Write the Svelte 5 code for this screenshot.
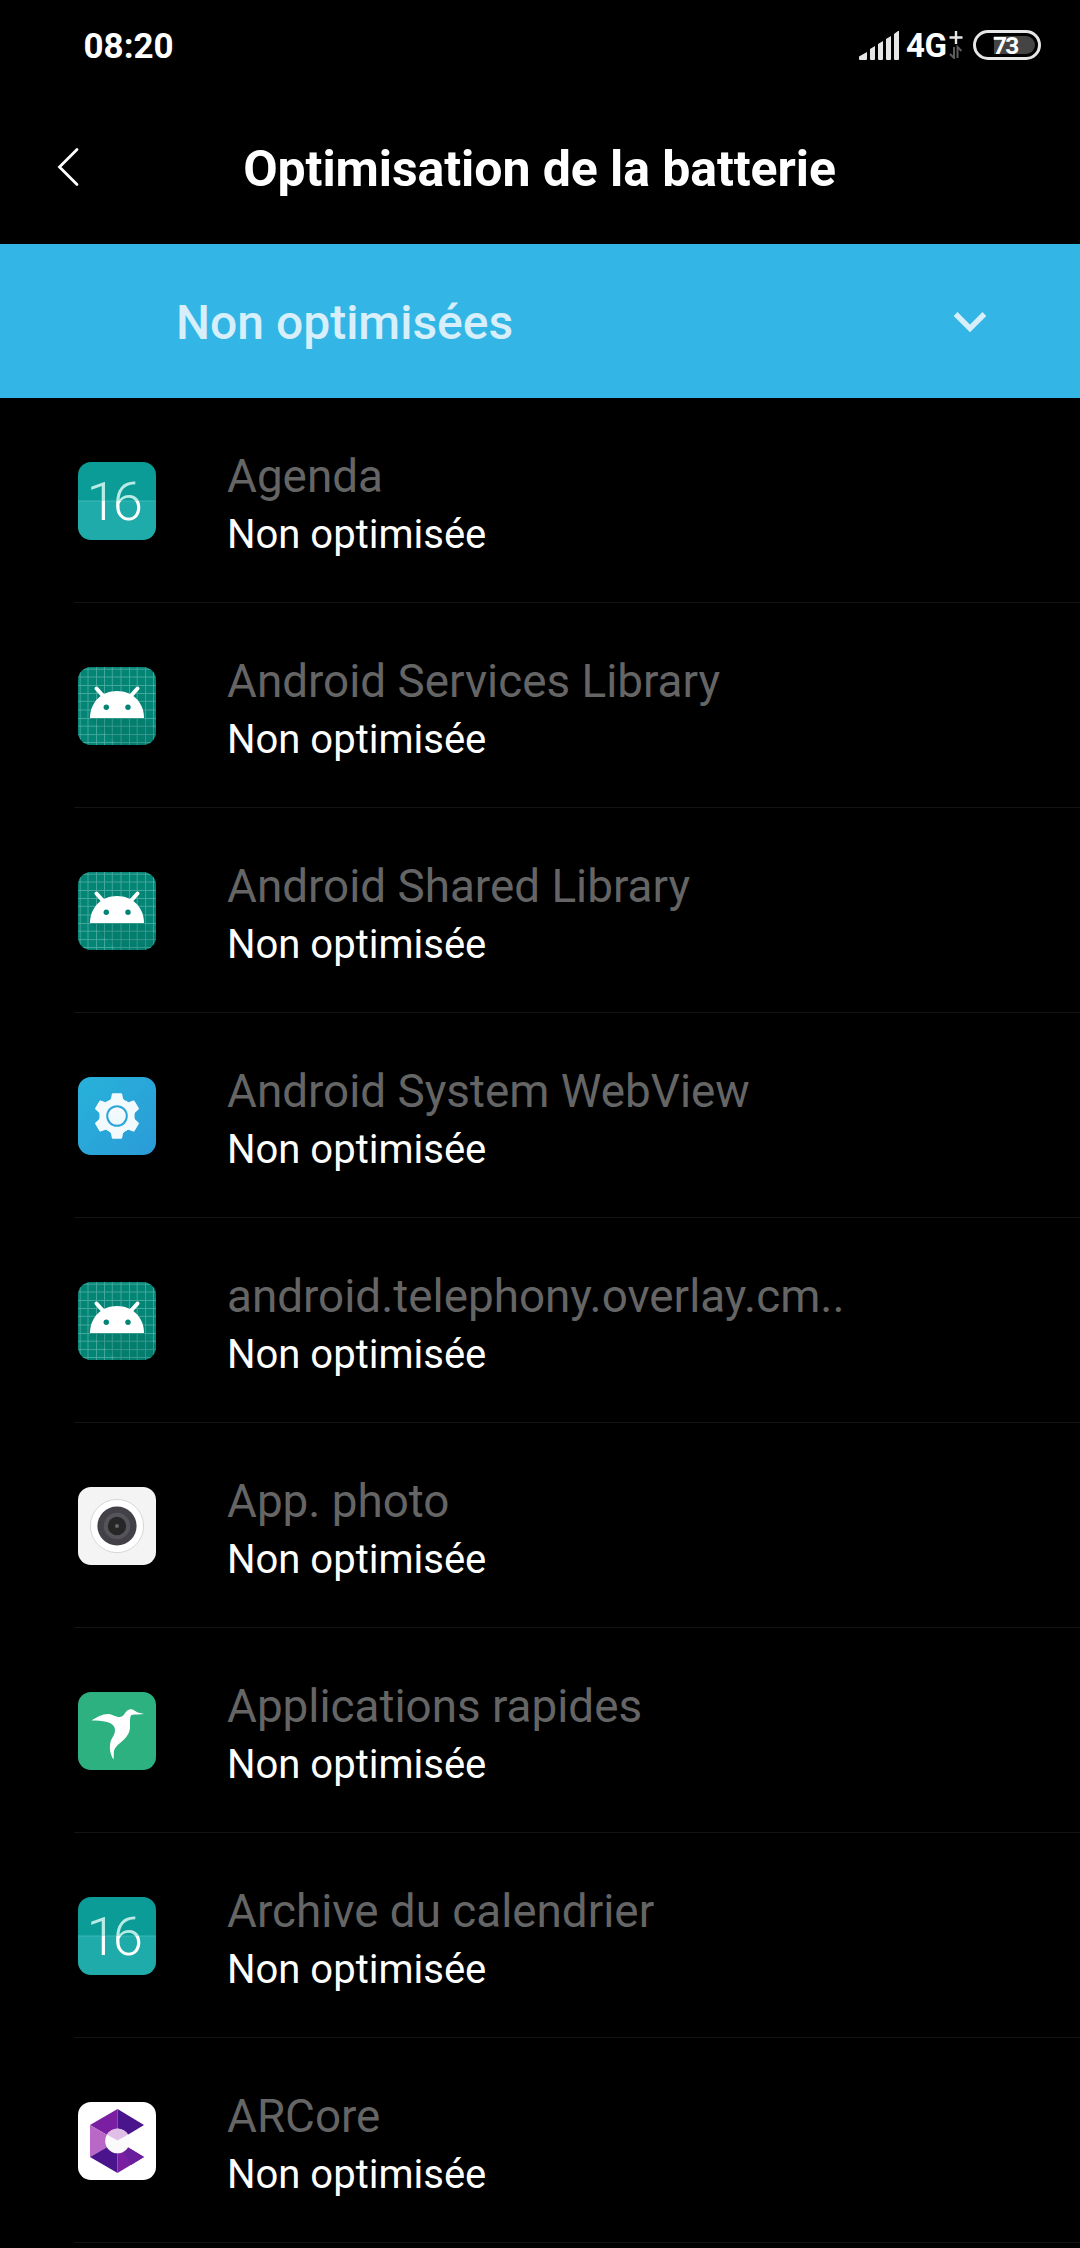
<script lang="ts">
	let time = '08:20';
	let battery = 73;
	let filter = 'Non optimisées';

	let apps = [
		{ name: 'Agenda', icon: 'calendar' },
		{ name: 'Android Services Library', icon: 'android' },
		{ name: 'Android Shared Library', icon: 'android' },
		{ name: 'Android System WebView', icon: 'gear' },
		{ name: 'android.telephony.overlay.cm..', icon: 'android' },
		{ name: 'App. photo', icon: 'camera' },
		{ name: 'Applications rapides', icon: 'bird' },
		{ name: 'Archive du calendrier', icon: 'calendar' },
		{ name: 'ARCore', icon: 'arcore' }
	];

	const gridLines = [2.2, 10, 18.5, 26.5, 34.3, 43, 51.5, 59.2, 67.6, 75.5];
	const teeth = [0, 60, 120, 180, 240, 300];
</script>

<div class="screen">
	<div class="status">
		<span class="time">{time}</span>
		<div class="indicators">
			<svg class="signal" width="40" height="29" viewBox="0 0 40 29">
				<path
					d="M0 25.5L8 21V28Q8 29 7 29H1Q0 29 0 28ZM11 18L16 15V28Q16 29 15 29H12Q11 29 11 28ZM19 13L24 10V28Q24 29 23 29H20Q19 29 19 28ZM27 8L32 5V28Q32 29 31 29H28Q27 29 27 28ZM35 3L39 0H40V28Q40 29 39 29H36Q35 29 35 28Z"
				/>
			</svg>
			<span class="network">4G</span>
			<svg class="data" width="14" height="28" viewBox="0 0 14 28" fill="none">
				<path d="M7 0V13M.5 6.5H13.5" stroke="#e6e6e6" stroke-width="2.4" />
				<path d="M5 16V27L1 23M8.500 27V16L12.500 20" stroke="#5c5c5c" stroke-width="2" />
			</svg>
			<div class="battery">
				<div class="level"></div>
				<span>{battery}</span>
			</div>
		</div>
	</div>

	<div class="header">
		<button class="back" aria-label="Retour">
			<svg width="22" height="40" viewBox="0 0 22 40" fill="none">
				<path d="M20 2.500L2.500 20L20 37.500" stroke="#fff" stroke-width="2.8" stroke-linecap="round" />
			</svg>
		</button>
		<h1>Optimisation de la batterie</h1>
	</div>

	<button class="filter">
		<span>{filter}</span>
		<svg width="34" height="21" viewBox="0 0 34 21" fill="none">
			<path d="M2.600 2L17 16.400L31.400 2" stroke="#d6effa" stroke-width="5.400" />
		</svg>
	</button>

	<ul>
		{#each apps as app}
			<li>
				<div class="icon {app.icon}">
					<svg width="78" height="78" viewBox="0 0 78 78">
						{#if app.icon === 'calendar'}
							<defs>
								<linearGradient id="digits" x1="0" y1="0" x2="0" y2="78" gradientUnits="userSpaceOnUse">
									<stop offset=".5" stop-color="#b9ebe5" />
									<stop offset=".5" stop-color="#fff" />
								</linearGradient>
							</defs>
							<rect width="78" height="39" fill="#0b9c98" />
							<rect y="39" width="78" height="39" fill="#1eaba9" />
							<path d="M0 39H78" stroke="#3fb9b5" />
							<text x="34.8" y="58" text-anchor="middle" fill="url(#digits)">16</text>
						{:else if app.icon === 'android'}
							<rect width="78" height="78" fill="#038576" />
							{#each gridLines as pos}
								<path d="M{pos} 0V78M0 {pos}H78" stroke="#4aa99e" stroke-width=".9" />
							{/each}
							<path d="M12 51L39 78H78V63L65 50Z" fill="#00564c" opacity=".18" />
							<path d="M18.500 21.500L27 31M59.500 21.500L51 31" stroke="#fff" stroke-width="4" stroke-linecap="round" />
							<path d="M12 51C12 35 24 24 39 24S66 35 66 51Z" fill="#fff" />
							<circle cx="28.3" cy="40.2" r="2.7" fill="#038576" />
							<circle cx="50" cy="40.2" r="2.7" fill="#038576" />
						{:else if app.icon === 'gear'}
							<defs>
								<linearGradient id="sky" x1="0" y1="0" x2="1" y2="1">
									<stop stop-color="#27b2d9" />
									<stop offset="1" stop-color="#2b9bd8" />
								</linearGradient>
								<linearGradient id="metal" x1="0" y1="16" x2="0" y2="62" gradientUnits="userSpaceOnUse">
									<stop stop-color="#fff" />
									<stop offset="1" stop-color="#e2f3fc" />
								</linearGradient>
							</defs>
							<rect width="78" height="78" fill="url(#sky)" />
							<g fill="#f3fafe">
								{#each teeth as angle}
									<path
										d="M35 16.200H43Q44 16.200 44.200 17.200L45 21.500Q45.500 23.500 49 25L39 39L29 25Q32.500 23.500 33 21.500L33.800 17.200Q34 16.200 35 16.200Z"
										transform="rotate({angle} 39 39)"
									/>
								{/each}
								<circle cx="39" cy="39" r="17.5" />
							</g>
							<circle cx="39" cy="39" r="9.8" fill="url(#metal)" stroke="#2ba6d8" stroke-width="2" />
						{:else if app.icon === 'camera'}
							<rect width="78" height="78" fill="#f4f4f4" />
							<circle cx="39" cy="39" r="26.6" fill="#fff" stroke="#c9c9c9" stroke-width=".7" />
							<circle cx="39" cy="39" r="19.6" fill="#434047" />
							<circle cx="39" cy="39" r="13.2" fill="#55545b" />
							<circle cx="39" cy="39" r="9.2" fill="#262626" />
							<circle cx="39" cy="39" r="2" fill="#68686a" />
						{:else if app.icon === 'bird'}
							<rect width="78" height="78" fill="#2eb181" />
							<path
								d="M13.500 28.500C19 25 25 21.500 31 22C35 22.500 37 25 42 25C47 24.500 47 17.500 52.500 17.200C56 17 57.500 20 61 20.700L66.200 22C62 22.800 57 22 54 22.800C51 24 52.500 31 52 36C51 46 43 49 38 55C34.500 59 36.500 63 35.500 67.500C32.500 63 31 57 32.500 50C33.500 46 37 43 37 38C37 33.500 33 31 29 30C24 28.500 19 28.500 13.500 28.500Z"
								fill="#fff"
							/>
						{:else}
							<rect width="78" height="78" fill="#fff" />
							<path d="M39.500 7V39L12 23Z" fill="#7b1fa2" />
							<path d="M39.500 7L66 23L39.500 39Z" fill="#4a148c" />
							<path d="M12 23L39.500 39L12 55Z" fill="#ba68c8" />
							<path d="M12 55L39.500 39V71Z" fill="#4a148c" />
							<path d="M39.500 39L66 55L39.500 71Z" fill="#7b1fa2" />
							<path d="M39.500 39L66 55L53 63Z" fill="#6a1f9c" />
							<circle cx="39.5" cy="39" r="12.3" fill="#fafafa" />
							<path d="M39.500 38.500L28.900 32.600A12.300 12.300 0 0 1 50.100 32.600Z" fill="#e1bee7" />
						{/if}
					</svg>
				</div>
				<div class="text">
					<div class="name">{app.name}</div>
					<div class="state">Non optimisée</div>
				</div>
			</li>
		{/each}
	</ul>
</div>

<style>
	:global(body) {
		background: #000;
	}

	.screen {
		width: 1080px;
		height: 2248px;
		overflow: hidden;
		background: #000;
		color: #fff;
		font-family: Roboto, 'Noto Sans', sans-serif;
	}

	button {
		border: none;
		padding: 0;
		background: none;
		color: inherit;
		font: inherit;
	}

	.status {
		display: flex;
		justify-content: space-between;
		align-items: center;
		height: 90px;
		padding: 0 39px 0 83.5px;
		box-sizing: border-box;
	}

	.time {
		font-size: 35px;
		font-weight: 700;
		line-height: 40px;
		padding-top: 3px;
	}

	.indicators {
		display: flex;
		align-items: center;
	}

	.signal {
		fill: #e6e6e6;
	}

	.network {
		width: 39px;
		margin: 1px 4px 0 7px;
		font-size: 33px;
		font-weight: 700;
		line-height: 34px;
		letter-spacing: -0.5px;
	}

	.data {
		margin-right: 10px;
	}

	.battery {
		position: relative;
		display: flex;
		align-items: center;
		width: 68px;
		height: 30px;
		box-sizing: border-box;
		border: 3px solid #e6e6e6;
		border-radius: 15px;
	}

	.level {
		width: 41px;
		height: 18px;
		margin-left: 18px;
		border-radius: 0 9px 9px 0;
		background: #444;
	}

	.battery span {
		position: absolute;
		left: 17px;
		top: 0;
		font-size: 24.5px;
		font-weight: 700;
		line-height: 25px;
		letter-spacing: -1.8px;
	}

	.header {
		display: grid;
		grid-template-columns: 120px 1fr 120px;
		align-items: center;
		height: 154px;
		box-sizing: border-box;
	}

	.back {
		display: flex;
		padding: 0 0 0 57px;
	}

	h1 {
		margin: 0;
		padding: 3px 1px 0 0;
		font-size: 50px;
		font-weight: 700;
		line-height: 60px;
		letter-spacing: -0.08px;
		text-align: center;
		white-space: nowrap;
	}

	.filter {
		display: flex;
		justify-content: space-between;
		align-items: center;
		width: 100%;
		height: 154px;
		padding: 0 93px 0 176px;
		background: #33b5e5;
		color: #d6effa;
		font-size: 48px;
		font-weight: 500;
		line-height: 60px;
	}

	.filter span {
		padding-top: 4px;
	}

	.filter svg {
		margin-top: 2px;
	}

	ul {
		margin: 0;
		padding: 0 0 0 74px;
		list-style: none;
	}

	li {
		display: flex;
		height: 205px;
		box-sizing: border-box;
		border-bottom: 1px solid #131313;
	}

	.icon {
		width: 78px;
		height: 78px;
		margin: 64px 71px 0 4px;
		border-radius: 13px;
		overflow: hidden;
	}

	.icon svg {
		display: block;
	}

	.calendar text {
		font-size: 54.5px;
		font-weight: 300;
		letter-spacing: -4px;
	}

	.text {
		padding-top: 50px;
		white-space: nowrap;
	}

	.name {
		color: #656565;
		font-size: 45.8px;
		line-height: 58px;
	}

	.state {
		margin-top: 1px;
		font-size: 40px;
		line-height: 56px;
	}
</style>
